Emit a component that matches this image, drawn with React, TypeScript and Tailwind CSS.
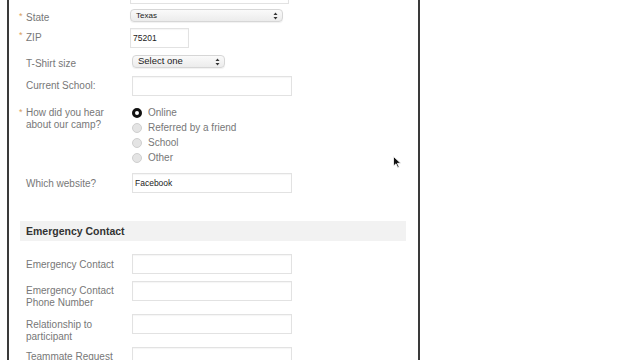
import React from 'react';

const font = { fontFamily: '"Liberation Sans", Arial, sans-serif' };

const Req = () => (
  <span className="absolute -left-[7px] top-[1px] text-[9px] text-[#d9a05b]">*</span>
);

const Arrows = () => (
  <svg width="5" height="8" viewBox="0 0 5 8" className="shrink-0">
    <path d="M2.5 0.5 L4.5 3 L0.5 3 Z" fill="#333" />
    <path d="M2.5 7.5 L4.5 5 L0.5 5 Z" fill="#333" />
  </svg>
);

const Select = ({ value, className }: { value: string; className: string }) => (
  <div
    className={`h-[13px] rounded-[4px] border border-[#d6d6d6] bg-gradient-to-b from-[#fafafa] to-[#ececec] shadow-[0_1px_1px_rgba(0,0,0,0.06)] flex items-center justify-between pl-[5px] pr-[4px] text-[#222] ${className}`}
  >
    <span>{value}</span>
    <Arrows />
  </div>
);

const Input = ({ value, className }: { value?: string; className: string }) => (
  <div
    className={`h-[20px] border border-[#e2e2e2] bg-white shadow-[inset_0_1px_1px_rgba(0,0,0,0.04)] flex items-center pl-[2px] text-[8.5px] text-[#222] ${className}`}
  >
    {value}
  </div>
);

const Radio = ({ checked, label }: { checked?: boolean; label: string }) => (
  <div className="h-[15px] flex items-center">
    {checked ? (
      <span className="w-[10px] h-[10px] rounded-full border-[3px] border-[#111] bg-white" />
    ) : (
      <span className="w-[10px] h-[10px] rounded-full border border-[#cfcfcf] bg-[#e4e4e4]" />
    )}
    <span className="ml-[6px] text-[10px] text-[#777]">{label}</span>
  </div>
);

const Label = ({ children, req, pt }: { children: React.ReactNode; req?: boolean; pt: string }) => (
  <div className={`relative w-[104px] shrink-0 text-[10px] leading-[12px] text-[#777] ${pt}`}>
    {req && <Req />}
    {children}
  </div>
);

export default function App() {
  return (
    <div className="w-[640px] h-[360px] overflow-hidden bg-white relative" style={font}>
      <div className="ml-[7px] w-[413px] h-[360px] border-l-2 border-r-2 border-[#3a3a3a] pl-[17px] overflow-hidden">
        {/* partial field from above */}
        <Input className="mt-[-16px] ml-[104px] w-[159px]" />

        <div className="flex items-start h-[13px] mt-[5px]">
          <Label req pt="pt-[3px]">State</Label>
          <Select value="Texas" className="w-[153px] text-[8px]" />
        </div>

        <div className="flex items-start h-[20px] mt-[6px]">
          <Label req pt="pt-[4px]">ZIP</Label>
          <Input value="75201" className="w-[59px]" />
        </div>

        <div className="flex items-start h-[13px] mt-[7px]">
          <Label pt="pt-[3px]">T-Shirt size</Label>
          <Select value="Select one" className="ml-[2px] w-[93px] text-[9.5px]" />
        </div>

        <div className="flex items-start h-[20px] mt-[8px]">
          <Label pt="pt-[4px]">Current School:</Label>
          <Input className="ml-[2px] w-[160px]" />
        </div>

        <div className="flex items-start mt-[9px]">
          <Label req pt="pt-[2px]">
            How did you hear
            <br />
            about our camp?
          </Label>
          <div className="ml-[2px]">
            <Radio checked label="Online" />
            <Radio label="Referred by a friend" />
            <Radio label="School" />
            <Radio label="Other" />
          </div>
        </div>

        <div className="flex items-start h-[20px] mt-[8px]">
          <Label pt="pt-[5px]">Which website?</Label>
          <Input value="Facebook" className="ml-[2px] w-[160px]" />
        </div>

        <div className="-ml-[6px] mr-[12px] mt-[28px] h-[20px] bg-[#f2f2f2] flex items-center pl-[6px] pt-[1px] text-[10.5px] font-bold text-[#333]">
          Emergency Contact
        </div>

        <div className="flex items-start h-[20px] mt-[13px]">
          <Label pt="pt-[5px]">Emergency Contact</Label>
          <Input className="ml-[2px] w-[160px]" />
        </div>

        <div className="flex items-start h-[20px] mt-[7px]">
          <Label pt="pt-[4px]">
            Emergency Contact
            <br />
            Phone Number
          </Label>
          <Input className="ml-[2px] w-[160px]" />
        </div>

        <div className="flex items-start h-[20px] mt-[13px]">
          <Label pt="pt-[5px]">
            Relationship to
            <br />
            participant
          </Label>
          <Input className="ml-[2px] w-[160px]" />
        </div>

        <div className="flex items-start h-[20px] mt-[13px]">
          <Label pt="pt-[4px]">Teammate Request</Label>
          <Input className="ml-[2px] w-[160px]" />
        </div>
      </div>

      {/* mouse cursor */}
      <svg className="absolute left-[393px] top-[156px]" width="9" height="13" viewBox="0 0 9 13">
        <path d="M0.5 0.5 L0.5 10 L3 7.8 L4.8 11.8 L6.2 11.2 L4.4 7.3 L7.8 7.3 Z" fill="#111" stroke="#fff" strokeWidth="0.8" />
      </svg>
    </div>
  );
}
